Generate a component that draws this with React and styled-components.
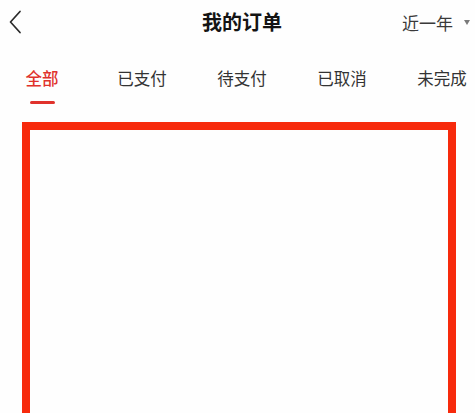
import React, { useState } from "react";
import styled, { createGlobalStyle } from "styled-components";

const Global = createGlobalStyle`
  html, body { margin: 0; padding: 0; background: #fefefe; overflow: hidden; }
  body { font-family: "Noto Sans CJK SC", "Noto Sans", sans-serif; }
`;

const Page = styled.div`
  width: 475px;
  height: 413px;
  overflow: hidden;
  background: #fefefe;
`;

const Header = styled.header`
  height: 44px;
  display: grid;
  grid-template-columns: 1fr auto 1fr;
  align-items: center;
  padding-left: 9px;
`;

const Back = styled.button`
  justify-self: start;
  background: none;
  border: 0;
  padding: 0;
  display: flex;
  cursor: pointer;
`;

const Title = styled.h1`
  margin: 0;
  font-size: 20px;
  font-weight: 700;
  color: #141414;
  line-height: 1;
`;

const Range = styled.div`
  justify-self: end;
  display: flex;
  align-items: center;
  gap: 11px;
  padding-right: 5px;
  font-size: 17px;
  color: #3a3a3a;
  line-height: 1;
`;

const Caret = styled.span`
  width: 0;
  height: 0;
  border-left: 3.5px solid transparent;
  border-right: 3.5px solid transparent;
  border-top: 5px solid #7a7a7a;
`;

const Tabs = styled.nav`
  display: flex;
  margin-left: -8px;
  padding-top: 23px;
`;

const Tab = styled.div`
  width: 100px;
  flex: none;
  display: flex;
  flex-direction: column;
  align-items: center;
  font-size: 16.5px;
  line-height: 22px;
  font-weight: ${(p) => (p.$active ? 500 : 400)};
  color: ${(p) => (p.$active ? "#e0322c" : "#333")};
  cursor: pointer;
`;

const Underline = styled.span`
  margin-top: 12px;
  width: 25px;
  height: 3px;
  border-radius: 2px;
  background: ${(p) => (p.$active ? "#e0322c" : "transparent")};
`;

const Box = styled.div`
  margin: 18px 19px 0 22px;
  height: 320px;
  border: 8px solid #f72a0c;
  background: #fefefe;
`;

const tabs = ["全部", "已支付", "待支付", "已取消", "未完成"];

export default function App() {
  const [active, setActive] = useState(0);
  return (
    <Page>
      <Global />
      <Header>
        <Back aria-label="返回">
          <svg width="14" height="24" viewBox="0 0 14 24">
            <polyline
              points="11,1.5 1.5,12 11,22.5"
              fill="none"
              stroke="#2a2a2a"
              strokeWidth="1.7"
              strokeLinecap="round"
              strokeLinejoin="round"
            />
          </svg>
        </Back>
        <Title>我的订单</Title>
        <Range>
          近一年
          <Caret />
        </Range>
      </Header>
      <Tabs>
        {tabs.map((t, i) => (
          <Tab key={t} $active={i === active} onClick={() => setActive(i)}>
            {t}
            <Underline $active={i === active} />
          </Tab>
        ))}
      </Tabs>
      <Box />
    </Page>
  );
}
